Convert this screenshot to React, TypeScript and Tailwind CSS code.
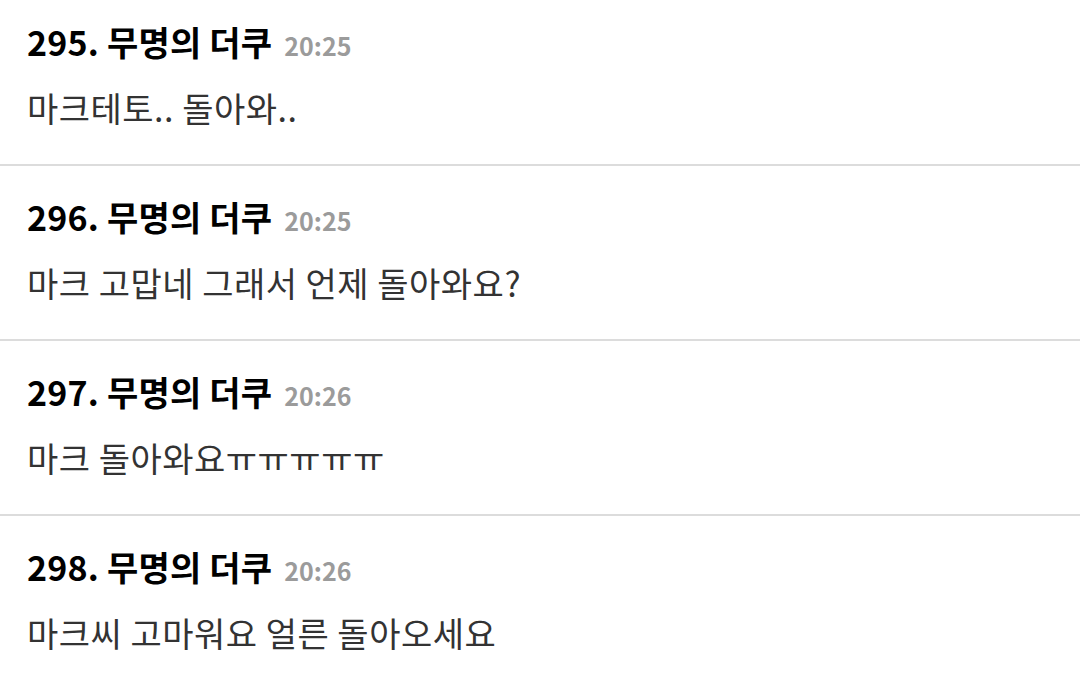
import React from 'react';

const comments = [
  { no: 295, time: '20:25', body: '마크테토.. 돌아와..' },
  { no: 296, time: '20:25', body: '마크 고맙네 그래서 언제 돌아와요?' },
  { no: 297, time: '20:26', body: '마크 돌아와요ㅠㅠㅠㅠㅠ' },
  { no: 298, time: '20:26', body: '마크씨 고마워요 얼른 돌아오세요' },
];

const App = () => {
  return (
    <div
      className="min-h-screen bg-white overflow-hidden"
      style={{ fontFamily: '"Noto Sans CJK KR", "Noto Sans", sans-serif' }}
    >
      <div className="-mt-[9px]">
        {comments.map((c) => (
          <div key={c.no} className="border-b-2 border-[#dcdcdc] pl-[27px] pt-[29px] pb-[34px]">
            <div className="text-[34px] leading-[44px] font-bold text-black tracking-[0.2px]">
              {c.no}. 무명의 더쿠
              <span className="ml-[12px] text-[25px] leading-none font-bold text-[#9b9b9b] tracking-normal">{c.time}</span>
            </div>
            <p className="mt-[22px] text-[34px] leading-[44px] text-[#333333] tracking-[0.5px]">{c.body}</p>
          </div>
        ))}
      </div>
    </div>
  );
};

export default App;
